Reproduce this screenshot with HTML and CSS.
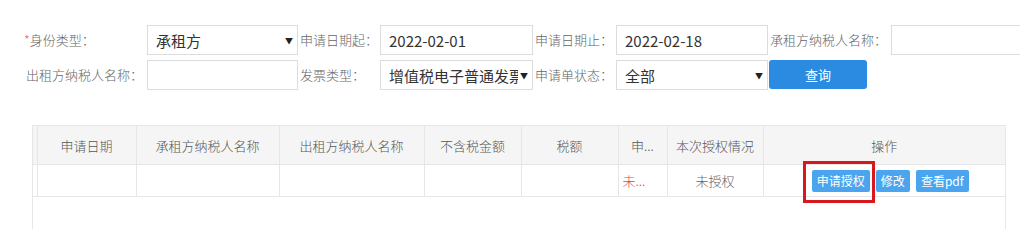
FILE: index.html
```html
<!DOCTYPE html>
<html lang="zh-CN">
<head>
<meta charset="utf-8">
<title>授权申请</title>
<link rel="stylesheet" href="styles.css">
</head>
<body>
<div class="page">
  <div class="form">
    <label class="lbl"><span class="req">*</span>身份类型：</label>
    <div class="field select"><span class="val">承租方</span><span class="caret">▼</span></div>
    <label class="lbl">申请日期起：</label>
    <div class="field"><span class="val">2022-02-01</span></div>
    <label class="lbl">申请日期止：</label>
    <div class="field"><span class="val">2022-02-18</span></div>
    <label class="lbl">承租方纳税人名称：</label>
    <div class="field"></div>

    <label class="lbl">出租方纳税人名称：</label>
    <div class="field"></div>
    <label class="lbl">发票类型：</label>
    <div class="field select"><span class="val clip">增值税电子普通发票</span><span class="caret">▼</span></div>
    <label class="lbl">申请单状态：</label>
    <div class="field select"><span class="val">全部</span><span class="caret">▼</span></div>
    <div class="btn-cell"><button class="query">查询</button></div>
  </div>

  <div class="grid-wrap">
    <table class="grid">
      <colgroup>
        <col class="c0"><col class="c1"><col class="c2"><col class="c3"><col class="c4"><col class="c5"><col class="c6"><col class="c7"><col>
      </colgroup>
      <thead>
        <tr>
          <th></th><th>申请日期</th><th>承租方纳税人名称</th><th>出租方纳税人名称</th><th>不含税金额</th><th>税额</th><th>申...</th><th>本次授权情况</th><th>操作</th>
        </tr>
      </thead>
      <tbody>
        <tr>
          <td></td><td></td><td></td><td></td><td></td><td></td><td class="status">未...</td><td>未授权</td>
          <td class="ops">
            <span class="op-wrap"><button class="op">申请授权</button><span class="mark"></span></span><button class="op">修改</button><button class="op">查看pdf</button>
          </td>
        </tr>
      </tbody>
    </table>
  </div>
</div>
</body>
</html>
```
FILE: styles.css
```css
html, body {
  margin: 0;
  padding: 0;
  background: #ffffff;
}
body {
  font-family: "Noto Sans CJK SC", "Microsoft YaHei", sans-serif;
  color: #333;
  overflow: hidden;
}
.page {
  width: 1020px;
  height: 229px;
  overflow: hidden;
}
.form {
  display: grid;
  grid-template-columns: 123px 151px 82px 153px 83px 152px 123px 151px;
  grid-auto-rows: 30px;
  row-gap: 5px;
  padding: 25px 0 0 24px;
}
.lbl {
  font-size: 13px;
  color: #666;
  line-height: 30px;
  white-space: nowrap;
  padding-left: 2px;
  font-weight: 300;
}
.lbl:first-child { padding-left: 0; }
.req { color: #f06060; }
.field {
  box-sizing: border-box;
  height: 30px;
  border: 1px solid #dcdcdc;
  display: flex;
  align-items: center;
  padding-left: 8px;
  font-size: 15px;
  color: #333;
  overflow: hidden;
  white-space: nowrap;
}
.field.select { padding-right: 4px; }
.val { flex: 1; min-width: 0; overflow: hidden; }
.val.clip { text-overflow: clip; }
.caret {
  font-size: 8px;
  color: #222;
  margin-left: 2px;
  flex: none;
}
.btn-cell { padding-left: 1px; }
.query {
  width: 98px;
  height: 29px;
  border: 0;
  border-radius: 3px;
  background: #2a8be0;
  color: #fff;
  font-family: inherit;
  font-size: 13px;
  padding: 0;
}
.grid-wrap {
  box-sizing: border-box;
  margin: 35px 0 0 32px;
  width: 974px;
  height: 104px;
  border: 1px solid #e6e6e6;
  border-bottom: 0;
}
.grid {
  width: 100%;
  table-layout: fixed;
  border-collapse: collapse;
}
.c0 { width: 4px; }
.c1 { width: 99px; }
.c2 { width: 143px; }
.c3 { width: 145px; }
.c4 { width: 97px; }
.c5 { width: 97px; }
.c6 { width: 49px; }
.c7 { width: 96px; }
.grid th, .grid td {
  border-right: 1px solid #e6e6e6;
  border-bottom: 1px solid #e6e6e6;
  text-align: center;
  white-space: nowrap;
  overflow: hidden;
  padding: 0;
  font-size: 13px;
  font-weight: 300;
}
.grid th:last-child, .grid td:last-child { border-right: 0; }
.grid th {
  height: 38px;
  background: #f5f5f5;
  color: #555;
}
.grid td {
  height: 31px;
  color: #666;
}
.grid td.status {
  color: #f03c3c;
  text-align: left;
  padding-left: 4px;
}
.grid td.ops {
  font-size: 0;
  overflow: visible;
  padding-left: 18px;
}
.op-wrap {
  position: relative;
  display: inline-block;
  margin-right: 6px;
  vertical-align: middle;
}
.op {
  height: 22px;
  border: 0;
  border-radius: 2px;
  background: #4aa5ee;
  color: #fff;
  font-family: inherit;
  font-size: 12px;
  padding: 0 5px;
  margin-right: 6px;
  vertical-align: middle;
}
.op-wrap .op { margin-right: 0; }
.mark {
  position: absolute;
  left: -9px;
  top: -9px;
  right: -5px;
  bottom: -11px;
  border: 3px solid #d7181f;
}
```
